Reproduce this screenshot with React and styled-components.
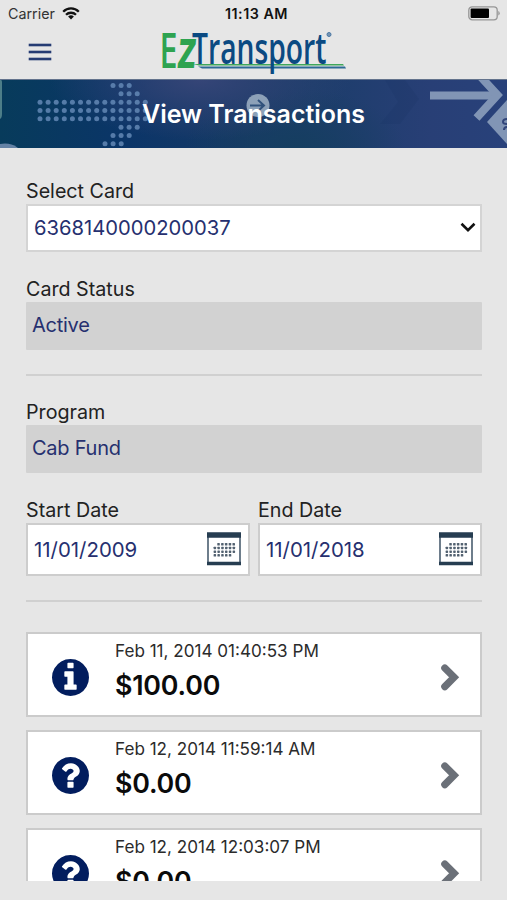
import React from 'react';
import styled, { createGlobalStyle } from 'styled-components';

const transactions = [
  { id: 1, type: 'info', date: 'Feb 11, 2014 01:40:53 PM', amount: '$100.00' },
  { id: 2, type: 'question', date: 'Feb 12, 2014 11:59:14 AM', amount: '$0.00' },
  { id: 3, type: 'question', date: 'Feb 12, 2014 12:03:07 PM', amount: '$0.00' },
];

const CIRCLE = 'M1664 896q0 209-103 385.5t-279.5 279.5-385.5 103-385.5-103-279.5-279.5-103-385.5 103-385.5 279.5-279.5 385.5-103 385.5 103 279.5 279.5 103 385.5z';
const GLYPHS = {
  info: 'M1152 1376v-160q0-14-9-23t-23-9h-96v-512q0-14-9-23t-23-9h-320q-14 0-23 9t-9 23v160q0 14 9 23t23 9h96v320h-96q-14 0-23 9t-9 23v160q0 14 9 23t23 9h448q14 0 23-9t9-23zM1024 480v-160q0-14-9-23t-23-9h-192q-14 0-23 9t-9 23v160q0 14 9 23t23 9h192q14 0 23-9t9-23z',
  question: 'M1024 1376v-192q0-14-9-23t-23-9h-192q-14 0-23 9t-9 23v192q0 14 9 23t23 9h192q14 0 23-9t9-23zM1280 704q0-88-55.5-163t-138.5-116-170-41q-243 0-371 213-15 24 8 42l132 100q7 6 19 6 16 0 25-12 53-68 86-92 34-24 86-24 48 0 85.5 26t37.5 59q0 38-20 61t-68 45q-63 28-115.5 86.5t-52.5 125.5v36q0 14 9 23t23 9h192q14 0 23-9t9-23q0-19 21.5-49.5t54.5-49.5q32-18 49-28.5t46-35 44.5-48 28-60.5 12.5-81z',
};

const TypeIcon = ({ type }) => (
  <svg width="37" height="37" viewBox="128 128 1536 1536">
    <path d={CIRCLE} fill="#021d5e" />
    <path d={GLYPHS[type]} fill="#fff" />
  </svg>
);

const WifiIcon = () => (
  <svg width="18" height="13" viewBox="0 0 18 13" fill="none" stroke="#111" strokeWidth="2.3">
    <path d="M1.2 4.7a11 11 0 0 1 15.6 0" />
    <path d="M4 7.8a7.1 7.1 0 0 1 10 0" />
    <path d="M9 12.4 6.1 9.6a4.1 4.1 0 0 1 5.8 0z" fill="#111" stroke="none" />
  </svg>
);

const BatteryIcon = () => (
  <svg width="32" height="15" viewBox="0 0 32 15">
    <rect x="0.8" y="0.8" width="28.4" height="13" rx="3.4" fill="none" stroke="#969696" strokeWidth="1.3" />
    <rect x="2.6" y="2.6" width="18.4" height="9.4" rx="1" fill="#000" />
    <path d="M30.3 5v4.6q1.4-.6 1.4-2.3T30.3 5z" fill="#969696" />
  </svg>
);

const Logo = () => (
  <svg width="190" height="48" viewBox="0 0 190 48" overflow="visible" fontFamily="'Open Sans', 'Noto Sans', sans-serif">
    <text x="-1.5" y="39.8" fontSize="49.5" fontWeight="600" fill="#2ea350" textLength="18" lengthAdjust="spacingAndGlyphs">E</text>
    <text x="0" y="39.8" fontSize="53" fontWeight="700" fill="#2ea350" textLength="18.5" lengthAdjust="spacingAndGlyphs" transform="translate(19 0) skewX(-5)">z</text>
    <path d="M32 36H182L183 37.5H38z" fill="#3fa65b" />
    <path d="M37 38.6H184L185 40.6H41z" fill="#2c6a96" />
    <text x="31" y="35.8" fontSize="43.5" fontWeight="600" fill="#0b4a82" textLength="134.5" lengthAdjust="spacingAndGlyphs">Transport</text>
    <circle cx="168" cy="6.5" r="2" fill="#7795b4" stroke="#4a78a4" strokeWidth="1" />
  </svg>
);

// Dotted arrow in the banner: [row y, first column x, dot count]
const dotRows = [
  [5.5, 113, 3], [13.8, 121, 3],
  [22.2, 40, 14], [30.5, 40, 14], [38.8, 40, 14],
  [47.2, 121, 3], [55.5, 113, 3], [63.8, 105, 3],
];

const BannerArt = () => (
  <svg width="507" height="68" viewBox="0 0 507 68">
    <g fill="#668bb8" opacity="0.82">
      {dotRows.map(([y, x, n]) =>
        Array.from({ length: n }, (_, i) => <circle key={`${x}-${y}-${i}`} cx={x + i * 8.1} cy={y} r="2.5" />)
      )}
    </g>
    <path d="M0 0h1q1 0 1 2v32q0 4-2 5z" fill="#4d7e88" />
    <ellipse cx="5" cy="76" rx="17" ry="12.5" fill="#6482a5" />
    <path d="M380 44 398 22 385 0h20l14 19-19 25z" fill="#172f61" opacity="0.15" />
    <circle cx="258" cy="25.5" r="11.5" fill="#8da1b8" />
    <path d="M250 25.5h14m-6-5.5 6 5.5-6 5.5" fill="none" stroke="#31527c" strokeWidth="2" />
    <g fill="none" stroke="#8195b5" strokeWidth="8">
      <path d="M430 15.5h67" />
      <path d="M480-4 497.5 15 476.5 38" />
    </g>
    <path d="M487 42 507 20v44z" fill="#8195b5" />
    <path d="M507 39q-4 0-4 3 0 2 4 2m0 3q-3 0-3 3" fill="none" stroke="#31457a" strokeWidth="2" />
  </svg>
);

// Days of the month as [row y, first column x, dot count]
const calendarRows = [[11.2, 10.5, 5], [14.9, 6.8, 6], [18.6, 6.8, 6], [22.3, 6.8, 5]];

const CalendarIcon = () => (
  <svg width="34" height="34" viewBox="0 0 34 34">
    <path d="M1 1v32M33 1v32" stroke="#5f7080" strokeWidth="1.8" />
    <path d="M0 .3h34V5.8H0zM0 29.7h34v3.6H0z" fill="#263d51" />
    {calendarRows.map(([y, x, n]) =>
      Array.from({ length: n }, (_, i) => (
        <rect key={`${y}-${i}`} x={x + i * 3.8 - 0.2} y={y - 0.2} width="2.5" height="2.5" rx="0.6" fill="#526170" />
      ))
    )}
  </svg>
);

const App = () => (
  <Screen>
    <GlobalStyle />
    <StatusBar>
      <Carrier>Carrier <WifiIcon /></Carrier>
      <Clock>11:13 AM</Clock>
      <Battery><BatteryIcon /></Battery>
    </StatusBar>
    <Header>
      <MenuButton aria-label="Menu"><span /><span /><span /></MenuButton>
      <Logo />
    </Header>
    <Banner>
      <BannerArt />
      <Title>View Transactions</Title>
    </Banner>

    <Content>
      <Field>
        <Label>Select Card</Label>
        <Select>
          6368140000200037
          <svg width="16" height="11" viewBox="0 0 16 11" fill="none" stroke="#111" strokeWidth="2.6">
            <path d="m1.5 1.7 6.5 6.4 6.5-6.4" />
          </svg>
        </Select>
      </Field>
      <Field $top={24}>
        <Label>Card Status</Label>
        <ReadOnly>Active</ReadOnly>
      </Field>
      <Divider />
      <Field $top={23}>
        <Label>Program</Label>
        <ReadOnly>Cab Fund</ReadOnly>
      </Field>
      <DateRow>
        <Field>
          <Label>Start Date</Label>
          <DateInput>11/01/2009 <CalendarIcon /></DateInput>
        </Field>
        <Field>
          <Label>End Date</Label>
          <DateInput>11/01/2018 <CalendarIcon /></DateInput>
        </Field>
      </DateRow>
      <Divider />

      <List>
        {transactions.map((t) => (
          <Card key={t.id}>
            <TypeIcon type={t.type} />
            <Details>
              <DateText>{t.date}</DateText>
              <Amount>{t.amount}</Amount>
            </Details>
            <svg width="20" height="28" viewBox="0 0 20 28" fill="none" stroke="#6b7078" strokeWidth="7.2" strokeLinecap="round">
              <path d="m4.8 5 9.3 9.3-9.3 9.3" />
            </svg>
          </Card>
        ))}
      </List>
    </Content>
  </Screen>
);

export default App;

// --- CSS ---
const GlobalStyle = createGlobalStyle`
  * { box-sizing: border-box; }
  body { margin: 0; background: #e6e6e6; font-family: Inter, "Liberation Sans", sans-serif; }
  svg { display: block; flex-shrink: 0; }
`;
const Screen = styled.div`
  width: 507px; height: 900px; display: flex; flex-direction: column; overflow: hidden;
  background: #e6e6e6; color: #1c1c1c;
`;
const StatusBar = styled.div`
  height: 28px; padding: 0 7px 2px 8px; display: grid; grid-template-columns: 1fr auto 1fr;
  align-items: center; flex-shrink: 0;
`;
const Carrier = styled.div`display: flex; align-items: center; gap: 7px; font-size: 14.3px; color: #333;`;
const Clock = styled.div`
  padding: 2px 0 0 5px; line-height: 18px; font-size: 14.3px; font-weight: 600; letter-spacing: 0.5px; color: #111;
`;
const Battery = styled.div`display: flex; justify-content: flex-end;`;
const Header = styled.header`
  height: 51px; padding: 0 29px; display: flex; align-items: flex-start; gap: 110px; flex-shrink: 0;
`;
const MenuButton = styled.button`
  width: 22px; height: 16px; margin-top: 16px; padding: 0; border: 0; background: none;
  display: flex; flex-direction: column; justify-content: space-between;
  span { display: block; width: 22px; height: 2px; background: #263c73; box-shadow: 0 0 0 0.3px #263c73; }
`;
const Banner = styled.div`
  height: 69px; display: grid; flex-shrink: 0; border-top: 1px solid #63738c;
  background:
    radial-gradient(ellipse 150px 60px at 200px 0, #354577 0%, #35457700 100%),
    radial-gradient(ellipse 110px 60px at 295px 68px, #153e60 0%, #153e6000 100%),
    linear-gradient(90deg, #073b5b 0%, #0b3568 25%, #173966 48%, #1c3d6b 62%, #283f76 85%, #28417a 100%);
  > * { grid-area: 1 / 1; }
`;
const Title = styled.h1`
  margin: 0; place-self: center; position: relative; color: #fff;
  font-size: 25px; font-weight: 600; letter-spacing: 0;
`;
const Content = styled.main`padding: 30px 25px 0 26px; display: flex; flex-direction: column; height: 732px;`;
const Field = styled.div`display: flex; flex-direction: column; margin-top: ${(p) => p.$top || 0}px;`;
const Label = styled.label`height: 26px; line-height: 26px; font-size: 19.7px; color: #222;`;
const Select = styled.div`
  height: 48px; padding: 0 4px 2px 6px; display: flex; align-items: center; justify-content: space-between;
  border: 2px solid #d4d4d4; background: #fff; color: #26306f; font-size: 20.2px;
`;
const ReadOnly = styled.div`
  height: 48px; padding: 0 6px 2px; display: flex; align-items: center; border-radius: 1px;
  background: #d2d2d2; color: #26306f; font-size: 20px; letter-spacing: -0.25px;
`;
const Divider = styled.hr`width: 100%; height: 2px; margin: 24px 0 0; border: 0; background: #d0d0d0; flex-shrink: 0;`;
const DateRow = styled.div`display: grid; grid-template-columns: 1fr 1fr; gap: 8px; margin-top: 24px;`;
const DateInput = styled.div`
  height: 53px; padding: 0 7px 1px 6px; display: flex; align-items: center; justify-content: space-between;
  border: 2px solid #cdcdcd; background: #fff; color: #26306f; font-size: 20.4px;
`;
const List = styled.div`
  margin-top: 30px; height: 249px; overflow: hidden; display: flex; flex-direction: column; gap: 13px; flex-shrink: 0;
`;
const Card = styled.div`
  height: 85px; padding: 5px 20px 0 24px; display: flex; align-items: center; flex-shrink: 0;
  border: 2px solid #cbcbcb; background: #fff;
`;
const Details = styled.div`flex: 1; margin-left: 26px; align-self: flex-start; padding-top: 1px;`;
const DateText = styled.div`height: 22px; line-height: 22px; font-size: 17.1px; color: #2b2b2b;`;
const Amount = styled.div`
  margin-top: 7px; line-height: 32px; font-size: 26.8px; font-weight: 600; letter-spacing: -0.2px; color: #0b0b0b;
`;
